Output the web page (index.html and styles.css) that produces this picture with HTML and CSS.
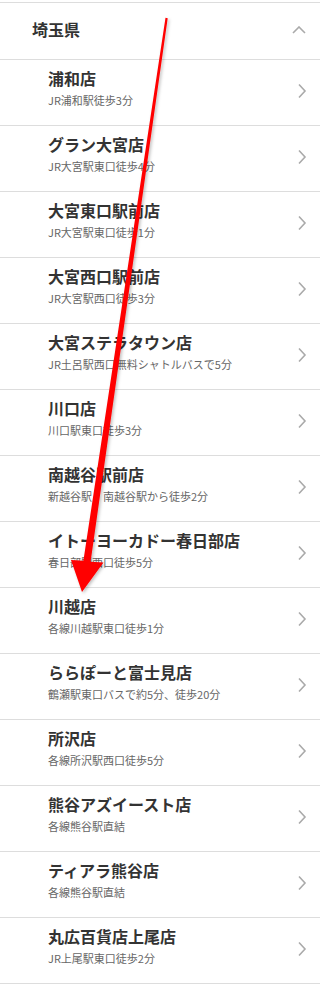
FILE: index.html
```html
<!DOCTYPE html>
<html lang="ja">
<head>
<meta charset="utf-8">
<title>埼玉県</title>
<link rel="stylesheet" href="styles.css">
</head>
<body>
<div class="page">
  <section class="pref">
    <div class="pref-head">
      <span class="pref-name">埼玉県</span>
      <svg class="chev-up" width="14" height="8" viewBox="0 0 14 8"><path d="M1 7 L7 1 L13 7" fill="none" stroke="#aaa" stroke-width="1.6"/></svg>
    </div>
    <ul class="shops">
      <li class="shop"><div class="shop-text"><div class="shop-name">浦和店</div><div class="shop-access">JR浦和駅徒歩3分</div></div><svg class="chev" width="10" height="16" viewBox="0 0 10 16"><path d="M2 1.5 L8 8 L2 14.5" fill="none" stroke="#aaa" stroke-width="1.6"/></svg></li>
      <li class="shop"><div class="shop-text"><div class="shop-name">グラン大宮店</div><div class="shop-access">JR大宮駅東口徒歩4分</div></div><svg class="chev" width="10" height="16" viewBox="0 0 10 16"><path d="M2 1.5 L8 8 L2 14.5" fill="none" stroke="#aaa" stroke-width="1.6"/></svg></li>
      <li class="shop"><div class="shop-text"><div class="shop-name">大宮東口駅前店</div><div class="shop-access">JR大宮駅東口徒歩1分</div></div><svg class="chev" width="10" height="16" viewBox="0 0 10 16"><path d="M2 1.5 L8 8 L2 14.5" fill="none" stroke="#aaa" stroke-width="1.6"/></svg></li>
      <li class="shop"><div class="shop-text"><div class="shop-name">大宮西口駅前店</div><div class="shop-access">JR大宮駅西口徒歩3分</div></div><svg class="chev" width="10" height="16" viewBox="0 0 10 16"><path d="M2 1.5 L8 8 L2 14.5" fill="none" stroke="#aaa" stroke-width="1.6"/></svg></li>
      <li class="shop"><div class="shop-text"><div class="shop-name">大宮ステラタウン店</div><div class="shop-access">JR土呂駅西口無料シャトルバスで5分</div></div><svg class="chev" width="10" height="16" viewBox="0 0 10 16"><path d="M2 1.5 L8 8 L2 14.5" fill="none" stroke="#aaa" stroke-width="1.6"/></svg></li>
      <li class="shop"><div class="shop-text"><div class="shop-name">川口店</div><div class="shop-access">川口駅東口徒歩3分</div></div><svg class="chev" width="10" height="16" viewBox="0 0 10 16"><path d="M2 1.5 L8 8 L2 14.5" fill="none" stroke="#aaa" stroke-width="1.6"/></svg></li>
      <li class="shop"><div class="shop-text"><div class="shop-name">南越谷駅前店</div><div class="shop-access">新越谷駅・南越谷駅から徒歩2分</div></div><svg class="chev" width="10" height="16" viewBox="0 0 10 16"><path d="M2 1.5 L8 8 L2 14.5" fill="none" stroke="#aaa" stroke-width="1.6"/></svg></li>
      <li class="shop"><div class="shop-text"><div class="shop-name">イトーヨーカドー春日部店</div><div class="shop-access">春日部駅西口徒歩5分</div></div><svg class="chev" width="10" height="16" viewBox="0 0 10 16"><path d="M2 1.5 L8 8 L2 14.5" fill="none" stroke="#aaa" stroke-width="1.6"/></svg></li>
      <li class="shop"><div class="shop-text"><div class="shop-name">川越店</div><div class="shop-access">各線川越駅東口徒歩1分</div></div><svg class="chev" width="10" height="16" viewBox="0 0 10 16"><path d="M2 1.5 L8 8 L2 14.5" fill="none" stroke="#aaa" stroke-width="1.6"/></svg></li>
      <li class="shop"><div class="shop-text"><div class="shop-name">ららぽーと富士見店</div><div class="shop-access">鶴瀬駅東口バスで約5分、徒歩20分</div></div><svg class="chev" width="10" height="16" viewBox="0 0 10 16"><path d="M2 1.5 L8 8 L2 14.5" fill="none" stroke="#aaa" stroke-width="1.6"/></svg></li>
      <li class="shop"><div class="shop-text"><div class="shop-name">所沢店</div><div class="shop-access">各線所沢駅西口徒歩5分</div></div><svg class="chev" width="10" height="16" viewBox="0 0 10 16"><path d="M2 1.5 L8 8 L2 14.5" fill="none" stroke="#aaa" stroke-width="1.6"/></svg></li>
      <li class="shop"><div class="shop-text"><div class="shop-name">熊谷アズイースト店</div><div class="shop-access">各線熊谷駅直結</div></div><svg class="chev" width="10" height="16" viewBox="0 0 10 16"><path d="M2 1.5 L8 8 L2 14.5" fill="none" stroke="#aaa" stroke-width="1.6"/></svg></li>
      <li class="shop"><div class="shop-text"><div class="shop-name">ティアラ熊谷店</div><div class="shop-access">各線熊谷駅直結</div></div><svg class="chev" width="10" height="16" viewBox="0 0 10 16"><path d="M2 1.5 L8 8 L2 14.5" fill="none" stroke="#aaa" stroke-width="1.6"/></svg></li>
      <li class="shop"><div class="shop-text"><div class="shop-name">丸広百貨店上尾店</div><div class="shop-access">JR上尾駅東口徒歩2分</div></div><svg class="chev" width="10" height="16" viewBox="0 0 10 16"><path d="M2 1.5 L8 8 L2 14.5" fill="none" stroke="#aaa" stroke-width="1.6"/></svg></li>
    </ul>
  </section>
  <svg class="annot-arrow" width="320" height="987" viewBox="0 0 320 987">
    <defs>
      <filter id="shadow" x="-20%" y="-5%" width="140%" height="110%">
        <feDropShadow dx="1.5" dy="1.5" stdDeviation="1.5" flood-color="#000" flood-opacity="0.25"/>
      </filter>
    </defs>
    <polygon filter="url(#shadow)" fill="#ff0000" points="165.5,17.8 167.7,18.2 90.6,561.8 103.5,562.5 82,592 71,560 83.4,560.8"/>
  </svg>
</div>
</body>
</html>
```

FILE: styles.css
```css
html, body {
  margin: 0;
  padding: 0;
  background: #fff;
}

body {
  font-family: "Noto Sans CJK JP", "Noto Sans", sans-serif;
  color: #333;
}

.page {
  position: relative;
  width: 320px;
  min-height: 987px;
  padding-top: 2px;
  box-sizing: border-box;
}

.pref {
  border-top: 1px solid #ddd;
}

.pref-head {
  display: flex;
  align-items: center;
  justify-content: space-between;
  padding: 15px 14px 19px 32px;
  border-bottom: 1px solid #ddd;
}

.pref-name {
  font-size: 16px;
  font-weight: bold;
  line-height: 22px;
  color: #333;
}

.chev-up {
  display: block;
  margin-top: 2px;
}

.shops {
  list-style: none;
  margin: 0;
  padding: 0;
}

.shop {
  display: flex;
  align-items: center;
  justify-content: space-between;
  height: 66px;
  box-sizing: border-box;
  border-bottom: 1px solid #ddd;
  padding: 0 13px 0 48px;
}

.shop-text {
  align-self: flex-start;
  padding-top: 7px;
}

.shop-name {
  font-size: 16px;
  font-weight: bold;
  line-height: 22px;
  color: #333;
  white-space: nowrap;
}

.shop-access {
  margin-top: 3px;
  font-size: 11px;
  line-height: 16px;
  color: #666;
  white-space: nowrap;
}

.chev {
  display: block;
  margin-bottom: 4px;
}

.annot-arrow {
  position: absolute;
  left: 0;
  top: 0;
  pointer-events: none;
}
```
